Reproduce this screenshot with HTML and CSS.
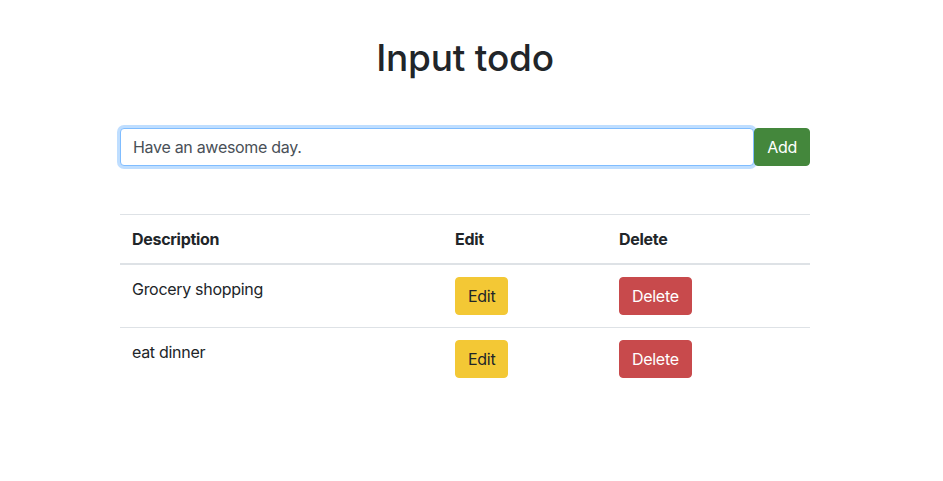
FILE: index.html
```html
<!DOCTYPE html>
<html lang="en">
<head>
<meta charset="utf-8">
<title>Input todo</title>
<link rel="stylesheet" href="styles.css">
</head>
<body>
<div class="page">
  <div class="container">
    <h1 class="title">Input todo</h1>
    <form class="todo-form">
      <input class="todo-input" type="text" value="Have an awesome day.">
      <button class="btn btn-success" type="button">Add</button>
    </form>
    <table class="todo-table">
      <thead>
        <tr>
          <th class="col-desc">Description</th>
          <th class="col-edit">Edit</th>
          <th class="col-del">Delete</th>
        </tr>
      </thead>
      <tbody>
        <tr>
          <td>Grocery shopping</td>
          <td><button class="btn btn-warning" type="button">Edit</button></td>
          <td><button class="btn btn-danger" type="button">Delete</button></td>
        </tr>
        <tr>
          <td>eat dinner</td>
          <td><button class="btn btn-warning" type="button">Edit</button></td>
          <td><button class="btn btn-danger" type="button">Delete</button></td>
        </tr>
      </tbody>
    </table>
  </div>
</div>
</body>
</html>
```
FILE: styles.css
```css
html, body {
  margin: 0;
  padding: 0;
  background: #fff;
}
body {
  font-family: Inter, "Liberation Sans", sans-serif;
  font-size: 16px;
  line-height: 1.5;
  color: #212529;
  letter-spacing: -0.3px;
}
.page {
  padding-right: 13px;
}
.container {
  width: 690px;
  margin: 0 auto;
  padding: 0 15px;
}
.title {
  margin: 34px 0 0;
  height: 48px;
  font-size: 37px;
  font-weight: 500;
  line-height: 48px;
  letter-spacing: -0.2px;
  text-align: center;
}
.todo-form {
  display: flex;
  margin-top: 46px;
}
.todo-input {
  flex: 1;
  height: 38px;
  box-sizing: border-box;
  padding: 6px 12px;
  font-family: inherit;
  font-size: 16px;
  line-height: 1.5;
  letter-spacing: inherit;
  color: #495057;
  background: #fff;
  border: 1px solid #80bdff;
  border-radius: 4px;
  outline: 0;
  box-shadow: 0 0 0 3px rgba(0, 123, 255, 0.25);
}
.btn {
  display: inline-block;
  box-sizing: border-box;
  height: 38px;
  padding: 6px 12px;
  font-family: inherit;
  font-size: 16px;
  line-height: 1.5;
  letter-spacing: inherit;
  border: 1px solid transparent;
  border-radius: 4px;
  cursor: pointer;
}
.btn-success {
  background: #44873c;
  border-color: #44873c;
  color: #fff;
}
.btn-warning {
  background: #f3c835;
  border-color: #f3c835;
  color: #212529;
}
.btn-danger {
  background: #c84a4c;
  border-color: #c84a4c;
  color: #fff;
}
.todo-table {
  width: 100%;
  margin-top: 48px;
  border-collapse: collapse;
}
.todo-table th,
.todo-table td {
  padding: 12px;
  text-align: left;
  vertical-align: top;
  border-top: 1px solid #dee2e6;
}
.todo-table th {
  font-weight: 700;
  border-bottom: 2px solid #dee2e6;
  vertical-align: bottom;
}
.col-desc { width: 299px; }
.col-edit { width: 140px; }
```
